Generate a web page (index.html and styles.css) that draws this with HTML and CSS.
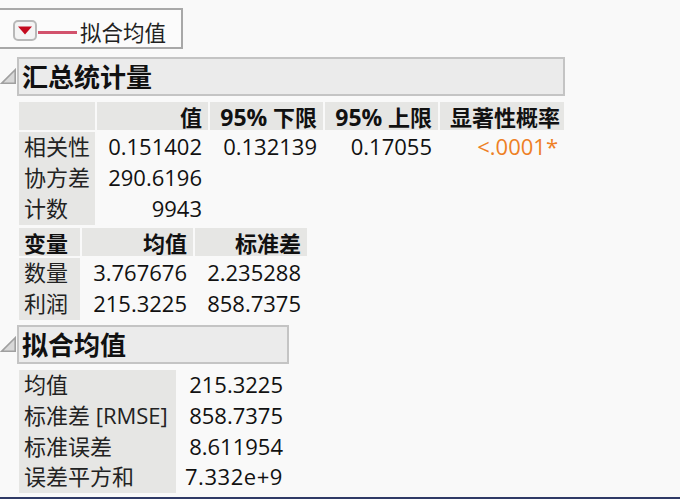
FILE: index.html
```html
<!DOCTYPE html>
<html lang="zh">
<head>
<meta charset="utf-8">
<title>拟合均值</title>
<link rel="stylesheet" href="styles.css">
</head>
<body>
<div class="page">
  <div class="legend">
    <button class="menu-btn"><svg width="16" height="9" viewBox="0 0 16 9"><path d="M1 0.5H15L8 8.5Z" fill="#c40a1e"/></svg></button>
    <span class="legend-line"></span>
    <span class="legend-text">拟合均值</span>
  </div>

  <section class="outline">
    <div class="outline-head">
      <svg class="disclosure" width="17" height="17" viewBox="0 0 17 17"><path d="M15.2 1.8V15.2H1.8Z" fill="#d8d8d8" stroke="#a0a0a0" stroke-width="1.6"/></svg>
      <h2 class="title title-wide">汇总统计量</h2>
    </div>
    <div class="grid grid-corr">
      <div class="hd"></div><div class="hd num">值</div><div class="hd num"><span class="pct">95%</span> 下限</div><div class="hd num"><span class="pct">95%</span> 上限</div><div class="hd num hd-last">显著性概率</div>
      <div class="lbl">相关性</div><div class="num">0.151402</div><div class="num">0.132139</div><div class="num">0.17055</div><div class="num sig">&lt;.0001*</div>
      <div class="lbl">协方差</div><div class="num">290.6196</div><div></div><div></div><div></div>
      <div class="lbl">计数</div><div class="num">9943</div><div></div><div></div><div></div>
    </div>
    <div class="grid grid-vars">
      <div class="hd left">变量</div><div class="hd num">均值</div><div class="hd num">标准差</div>
      <div class="lbl">数量</div><div class="num">3.767676</div><div class="num">2.235288</div>
      <div class="lbl">利润</div><div class="num">215.3225</div><div class="num">858.7375</div>
    </div>
  </section>

  <section class="outline outline-fit">
    <div class="outline-head">
      <svg class="disclosure" width="17" height="17" viewBox="0 0 17 17"><path d="M15.2 1.8V15.2H1.8Z" fill="#d8d8d8" stroke="#a0a0a0" stroke-width="1.6"/></svg>
      <h2 class="title title-narrow">拟合均值</h2>
    </div>
    <div class="grid grid-fit">
      <div class="lbl">均值</div><div class="num">215.3225</div>
      <div class="lbl">标准差 [RMSE]</div><div class="num">858.7375</div>
      <div class="lbl">标准误差</div><div class="num">8.611954</div>
      <div class="lbl">误差平方和</div><div class="num sci">7.332e+9</div>
    </div>
  </section>
</div>
<div class="bottom-rule"></div>
</body>
</html>
```
FILE: styles.css
```css
* { box-sizing: border-box; }
html, body { margin: 0; height: 499px; overflow: hidden; }
body {
  background: #f9f9f9;
  color: #111;
  font-family: "Open Sans", "Noto Sans CJK SC", sans-serif;
  font-size: 22px;
  display: flex;
  flex-direction: column;
}
.page { flex: 1; padding-top: 8px; }
.legend {
  width: 185px;
  height: 41px;
  margin-left: -2px;
  padding: 3px 0 0 13px;
  border: 2px solid #a8a8a8;
  display: flex;
  align-items: center;
  background: #fbfbfb;
}
.menu-btn {
  width: 24px;
  height: 21px;
  padding: 0;
  border: 2px solid #b8b8b8;
  border-radius: 5px;
  background: #f4f4f4;
  display: flex;
  align-items: center;
  justify-content: center;
}
.legend-line {
  width: 39px;
  height: 3px;
  margin: 4px 0 0 1px;
  background: #d2526c;
}
.legend-text {
  margin: 4px 0 0 3px;
  font-size: 21.5px;
  line-height: 30px;
  font-family: "Noto Sans CJK SC", sans-serif;
  color: #222;
}
.outline { margin-top: 8px; }
.outline-fit { margin-top: 5px; }
.outline-head { display: flex; align-items: center; }
.disclosure { flex: none; }
.title {
  margin: 0;
  height: 39px;
  padding-left: 3px;
  border: 2px solid #c4c4c4;
  background: #ebebeb;
  font-family: "Noto Sans CJK SC", sans-serif;
  font-size: 26px;
  font-weight: 700;
  line-height: 33px;
  color: #111;
}
.title-wide { width: 548px; }
.title-narrow { width: 272px; }
.grid {
  display: grid;
  margin-left: 19px;
  line-height: 29px;
  column-gap: 2px;
}
.grid-corr {
  margin-top: 6px;
  grid-template-columns: 76px 111px 113px 113px 124px;
  grid-template-rows: 30px repeat(3, 31px);
}
.grid-vars {
  margin-top: 3px;
  grid-template-columns: 61px 111px 112px;
  grid-template-rows: 30px repeat(2, 31px);
}
.grid-fit {
  margin-top: 6px;
  grid-template-columns: 157px 113px;
  grid-auto-rows: 30.75px;
  column-gap: 0;
}
.hd {
  height: 28px;
  background: #e6e6e4;
  font-weight: 700;
  line-height: 30px;
  padding-right: 6px;
}
.hd.hd-last { padding-right: 4px; }
.hd.left { padding: 0 0 0 5px; text-align: left; }
.pct { font-size: 23px; }
.lbl {
  background: #e6e6e4;
  padding-left: 5px;
  color: #222;
  white-space: nowrap;
}
.num { text-align: right; padding-right: 6px; white-space: nowrap; }
.sig { color: #ee8025; }
.sci { letter-spacing: 0.55px; }
.bottom-rule { height: 2px; background: #2f3a66; flex: none; }
```
